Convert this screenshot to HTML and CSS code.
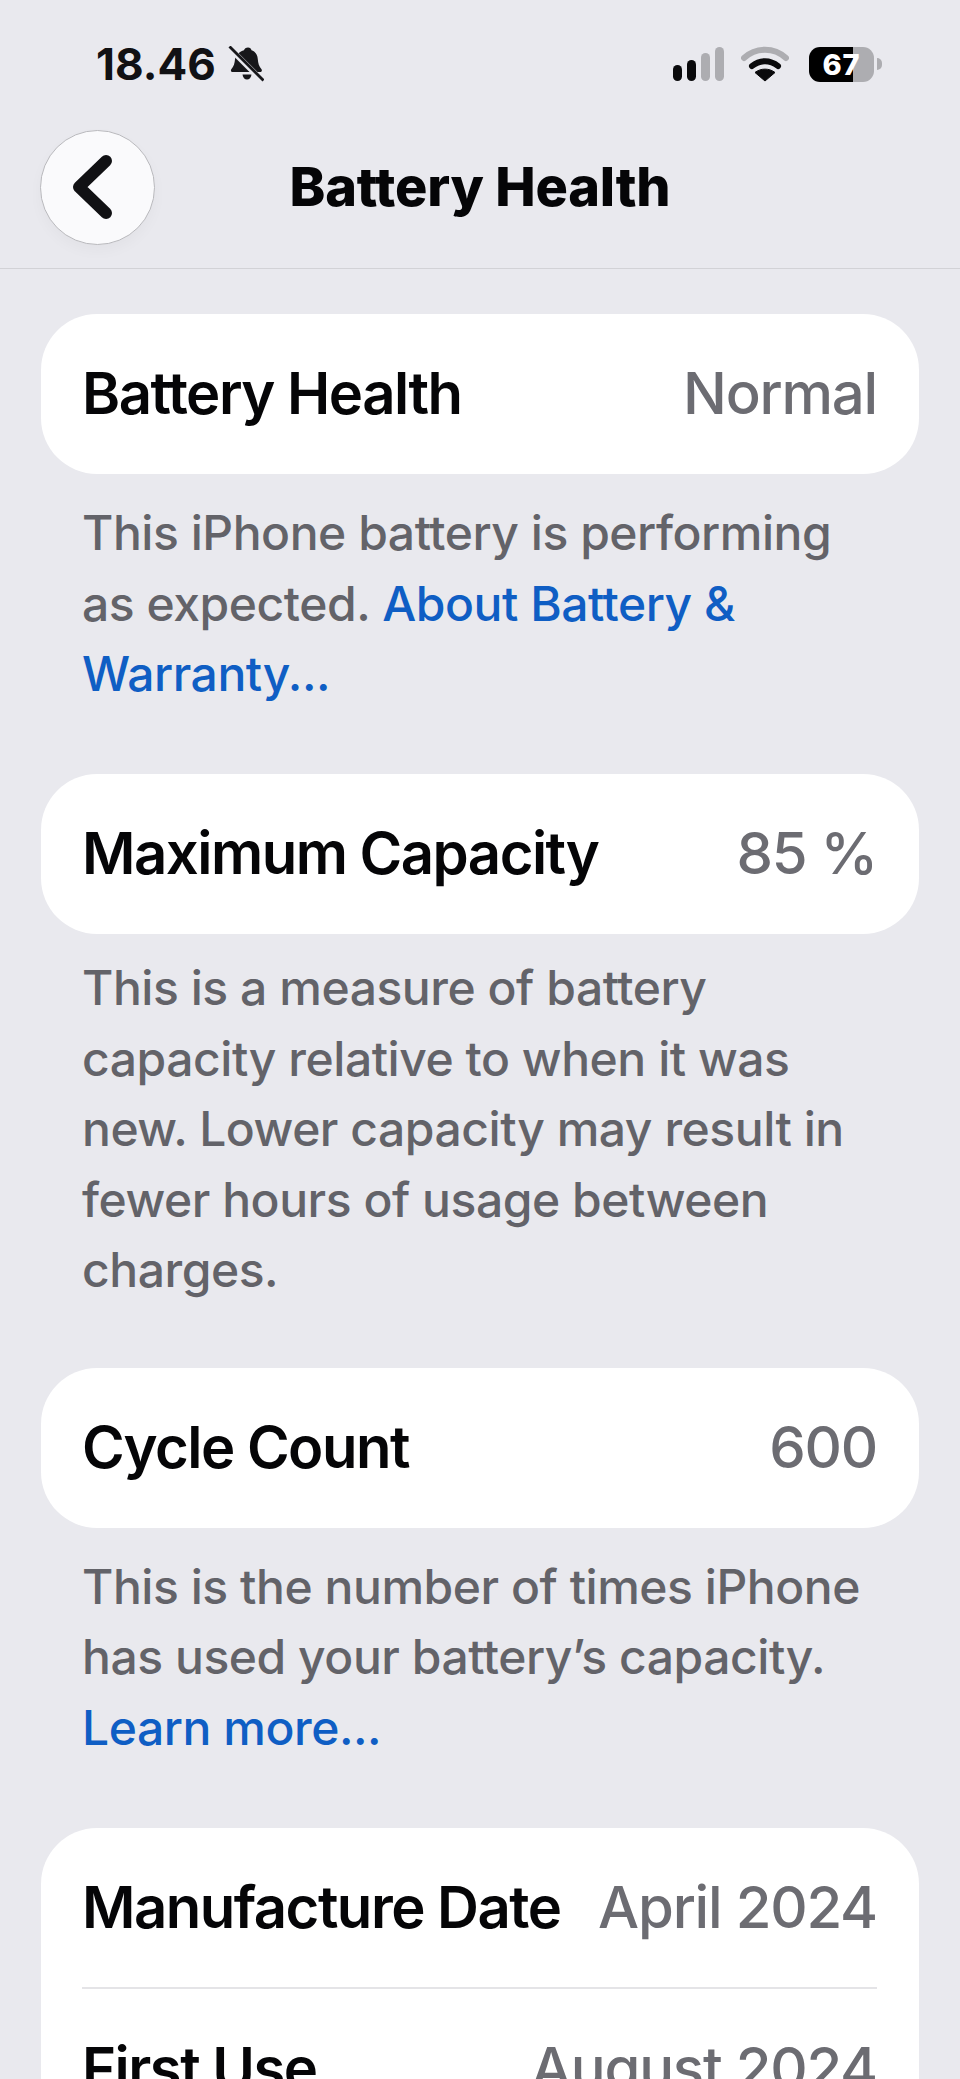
FILE: index.html
```html
<!DOCTYPE html>
<html lang="en">
<head>
  <meta charset="UTF-8" />
  <meta name="viewport" content="width=device-width, initial-scale=1.0"/>
  <title>Battery Health</title>
  <link rel="stylesheet" href="styles.css">
</head>
<body>
  <div class="status">
    <div class="status-left">
      <span class="time">18.46</span>
      <svg class="bell" width="36" height="36" viewBox="0 0 36 36">
        <path d="M20 1.500c2 0 3.200 1.200 3.500 2.800 4 1.400 6 4.600 6.300 9 .3 4 1.200 7 3.700 10 .8 1 .3 2.700-1.200 2.700H4.500c-1.500 0-2-1.700-1.200-2.700 2.500-3 3.400-6 3.700-10 .3-4.400 5-7.800 9-9C16.300 2.700 18 1.500 20 1.500z" fill="#17171a"/>
        <path d="M14.500 28.500h9c-.3 3-2.200 5-4.500 5s-4.200-2-4.500-5z" fill="#17171a"/>
        <path d="M1 1.500l34 34" stroke="#e9e9ee" stroke-width="5.500"/>
        <path d="M1.500 .5l34 34" stroke="#17171a" stroke-width="2.800"/>
      </svg>
    </div>
    <div class="status-right">
      <svg width="52" height="36" viewBox="0 0 52 36">
        <rect x="1" y="19" width="9" height="16" rx="4.500" fill="#0a0a0c"/>
        <rect x="15" y="14" width="9" height="21" rx="4.500" fill="#0a0a0c"/>
        <rect x="29" y="7" width="9" height="28" rx="4.500" fill="#adadb1"/>
        <rect x="43" y="1" width="9" height="34" rx="4.500" fill="#adadb1"/>
      </svg>
      <svg class="wifi" width="48" height="36" viewBox="0 0 48 36">
        <path d="M3 12C15 1 33 1 45 12" stroke="#adadb1" stroke-width="6" fill="none" stroke-linecap="round"/>
        <path d="M11 20c8-6.500 18-6.500 26 0" stroke="#0a0a0c" stroke-width="6" fill="none" stroke-linecap="round"/>
        <path d="M24 35l-10-8.500c5.500-4.500 14.500-4.500 20 0z" fill="#0a0a0c" stroke="#0a0a0c" stroke-width="1" stroke-linejoin="round"/>
      </svg>
      <div class="battery">
        <div class="battery-body"><span class="battery-level">67</span></div>
        <div class="battery-tip"></div>
      </div>
    </div>
  </div>

  <div class="navbar">
    <button class="back">
      <svg width="44" height="68" viewBox="0 0 44 68">
        <path d="M36 8L9 34 36 60" stroke="#111114" stroke-width="12" fill="none" stroke-linecap="round" stroke-linejoin="round"/>
      </svg>
    </button>
    <h1>Battery Health</h1>
  </div>

  <div class="content">
    <div class="card">
      <div class="row"><span>Battery Health</span><span class="value">Normal</span></div>
    </div>
    <p class="note">This iPhone battery is performing as expected. <a href="#">About Battery &amp; Warranty...</a></p>

    <div class="card">
      <div class="row"><span>Maximum Capacity</span><span class="value">85 %</span></div>
    </div>
    <p class="note note-long">This is a measure of battery capacity relative to when it was new. Lower capacity may result in fewer hours of usage between charges.</p>

    <div class="card">
      <div class="row"><span>Cycle Count</span><span class="value">600</span></div>
    </div>
    <p class="note">This is the number of times iPhone has used your battery’s capacity. <a href="#">Learn more...</a></p>

    <div class="card">
      <div class="row"><span>Manufacture Date</span><span class="value">April 2024</span></div>
      <div class="divider"></div>
      <div class="row"><span>First Use</span><span class="value">August 2024</span></div>
    </div>
  </div>
</body>
</html>
```

FILE: styles.css
```css
html, body { height: 2079px; overflow: hidden; }
body { margin: 0; background: #e9e9ee; font-family: Inter, "Noto Sans", sans-serif; color: #050507; }

.status { height: 128px; padding: 0 78px 0 96px; display: flex; justify-content: space-between; align-items: center; box-sizing: border-box; }
.status-left { display: flex; align-items: center; gap: 12px; }
.time { font-size: 44px; font-weight: 700; color: #111114; }
.status-right { display: flex; align-items: center; gap: 17px; }
.wifi { margin-right: 3px; }
.battery { display: flex; align-items: center; gap: 3px; }
.battery-body { width: 65px; height: 35px; border-radius: 11px; background: linear-gradient(to right, #000 0, #000 67%, #adadb1 67%); display: flex; align-items: center; justify-content: center; }
.battery-level { color: #fff; font-size: 29px; font-weight: 800; letter-spacing: 1px; }
.battery-tip { width: 5px; height: 12px; border-radius: 0 6px 6px 0; background: #adadb1; }

.navbar { height: 141px; border-bottom: 1px solid #d2d2d6; display: flex; align-items: center; padding: 0 0 22px 40px; box-sizing: border-box; }
.back { width: 115px; height: 115px; border-radius: 50%; background: #fafafc; border: 1px solid #b9b9bd; box-shadow: 0 6px 14px rgba(0,0,0,.03); display: flex; align-items: center; justify-content: center; padding: 0 12px 0 0; }
h1 { margin: 0 0 2px 0; font-size: 54px; font-weight: 800; flex: 1; text-align: center; padding-right: 155px; letter-spacing: -.2px; color: #050507; }

.content { padding: 45px 41px 0 41px; }
.card { background: #fff; border-radius: 56px; padding: 0 42px 0 41px; }
.row { height: 160px; display: flex; justify-content: space-between; align-items: center; font-size: 58px; font-weight: 600; letter-spacing: -1.500px; padding-bottom: 2px; box-sizing: border-box; }
.value { color: #6c6c72; font-weight: 500; letter-spacing: -1.200px; }
.divider { height: 2px; background: #e4e4e7; margin-top: -1px; }
.note { margin: 24px 0 64.500px 0; padding: 0 42px 0 41px; font-size: 48px; line-height: 70.500px; font-weight: 500; color: #636369; letter-spacing: -.45px; }
.note-long { margin: 19px 0 62px 0; }
.note a { color: #0f5ec4; text-decoration: none; }
```
